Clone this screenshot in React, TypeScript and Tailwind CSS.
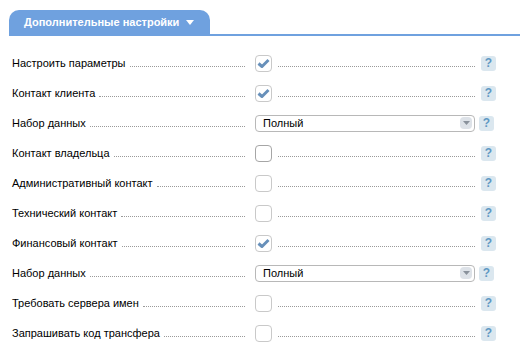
import React from 'react'

type Row =
  | { label: string; kind: 'check'; checked: boolean; dark?: boolean }
  | { label: string; kind: 'select'; value: string }

const rows: Row[] = [
  { label: 'Настроить параметры', kind: 'check', checked: true },
  { label: 'Контакт клиента', kind: 'check', checked: true },
  { label: 'Набор данных', kind: 'select', value: 'Полный' },
  { label: 'Контакт владельца', kind: 'check', checked: false, dark: true },
  { label: 'Административный контакт', kind: 'check', checked: false },
  { label: 'Технический контакт', kind: 'check', checked: false },
  { label: 'Финансовый контакт', kind: 'check', checked: true },
  { label: 'Набор данных', kind: 'select', value: 'Полный' },
  { label: 'Требовать сервера имен', kind: 'check', checked: false },
  { label: 'Запрашивать код трансфера', kind: 'check', checked: false },
]

function Help() {
  return (
    <div className="flex h-[15px] w-[15px] items-center justify-center rounded-[3px] bg-[#dbe7ef] text-[12px] font-bold leading-none text-[#5f98c3]">
      ?
    </div>
  )
}

function Checkbox({ checked, dark }: { checked: boolean; dark?: boolean }) {
  return (
    <div
      className={`flex h-[17px] w-[17px] items-center justify-center rounded-[4px] border bg-white ${
        dark ? 'border-[#a6a6a6]' : 'border-[#c9c9c9]'
      }`}
    >
      {checked && (
        <svg width="13" height="11" viewBox="0 0 13 11">
          <path d="M1.5 5.5 L5 8.5 L11.5 2" fill="none" stroke="#6790ba" strokeWidth="3" strokeLinejoin="round" />
        </svg>
      )}
    </div>
  )
}

function Select({ value }: { value: string }) {
  return (
    <div className="flex h-[17px] w-[220px] items-center justify-between rounded-[4px] border border-[#b8b8b8] bg-white pl-[7px] pr-[2px]">
      <span className="text-[11px] leading-none text-black">{value}</span>
      <div className="flex h-[12px] w-[12px] items-center justify-center rounded-[4px] bg-[#dde2e8]">
        <svg width="7" height="4" viewBox="0 0 7 4">
          <path d="M0 0 L7 0 L3.5 4 Z" fill="#8a929c" />
        </svg>
      </div>
    </div>
  )
}

export default function App() {
  return (
    <div className="h-[351px] w-[520px] overflow-hidden bg-white font-['Liberation_Sans',Arial,sans-serif]">
      <div className="ml-[9px] mt-[10px] border-b-2 border-[#6fa1df]">
        <div className="flex h-[24px] w-[201px] items-center rounded-t-[10px] bg-[#6fa1df] pl-[15px]">
          <span className="text-[11px] font-bold text-white">Дополнительные настройки</span>
          <svg className="ml-[7px]" width="8" height="5" viewBox="0 0 8 5">
            <path d="M0 0 L8 0 L4 5 Z" fill="#ffffff" />
          </svg>
        </div>
      </div>

      <div className="mt-[12px]">
        {rows.map((row, i) => (
          <div key={i} className="flex h-[30px] items-center pl-[12px]">
            <div className="flex w-[233px] items-end text-[11px] leading-[13px] text-black">
              <span className="whitespace-nowrap">{row.label}</span>
              <div className="mb-[3px] ml-[4px] flex-1 border-b border-dotted border-[#9a9a9a]" />
            </div>
            <div className="ml-[10px] flex items-center">
              {row.kind === 'check' ? (
                <>
                  <Checkbox checked={row.checked} dark={row.dark} />
                  <div className="ml-[6px] mt-[7px] w-[197px] border-b border-dotted border-[#9a9a9a]" />
                  <div className="ml-[6px]">
                    <Help />
                  </div>
                </>
              ) : (
                <>
                  <Select value={row.value} />
                  <div className="ml-[4px]">
                    <Help />
                  </div>
                </>
              )}
            </div>
          </div>
        ))}
      </div>
    </div>
  )
}
